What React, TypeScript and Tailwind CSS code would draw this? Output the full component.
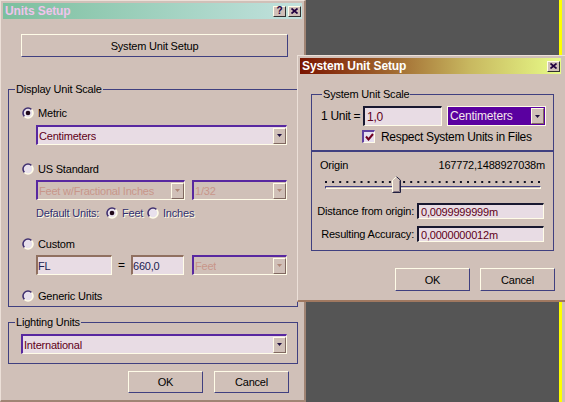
import React from "react";

function Radio({ checked }: { checked?: boolean }) {
  return (
    <svg width="12" height="12" viewBox="0 0 12 12" className="shrink-0">
      <circle cx="6" cy="6" r="5" fill="#e8e0ec" />
      <path d="M2.46 9.54 A5 5 0 0 1 9.54 2.46" fill="none" stroke="#403070" strokeWidth="1.6" />
      <path d="M9.54 2.46 A5 5 0 0 1 2.46 9.54" fill="none" stroke="#fffce8" strokeWidth="1.6" />
      {checked && <circle cx="6" cy="6" r="2.3" fill="#200818" />}
    </svg>
  );
}

function Arrow({ disabled }: { disabled?: boolean }) {
  return (
    <div className="ml-auto w-[13px] h-[16px] shrink-0 flex items-center justify-center bg-[#d0c0b8] border border-t-[#fffce8] border-l-[#fffce8] border-b-[#806860] border-r-[#806860]">
      <svg width="5" height="3" viewBox="0 0 5 3">
        <path d="M0 0 H5 L2.5 3 Z" fill={disabled ? "#b08878" : "#201040"} />
      </svg>
    </div>
  );
}

function Dropdown({ text, className, disabled }: { text: string; className: string; disabled?: boolean }) {
  return (
    <div
      className={`h-[20px] flex items-center border-t-2 border-l-2 border-t-[#5828a0] border-l-[#5828a0] border-b border-r border-b-[#fffce8] border-r-[#fffce8] ${
        disabled ? "bg-[#d0c0b8] text-[#c8968a]" : "bg-[#e8dce4] text-[#600018]"
      } ${className}`}
    >
      <span className="pl-[1px] whitespace-nowrap overflow-hidden">{text}</span>
      <Arrow disabled={disabled} />
    </div>
  );
}

function TextInput({ text, className, dark }: { text: string; className: string; dark?: boolean }) {
  return (
    <div
      className={`flex items-center bg-[#e8dce4] border-t-2 border-l-2 border-b border-r border-b-[#fffce8] border-r-[#fffce8] whitespace-nowrap overflow-hidden ${
        dark ? "border-t-[#181830] border-l-[#181830] text-[#600018] pl-[2px]" : "border-t-[#907060] border-l-[#907060] text-[#202050]"
      } ${className}`}
    >
      {text}
    </div>
  );
}

function Btn({ text, className }: { text: string; className: string }) {
  return (
    <div
      className={`flex items-center justify-center bg-[#d0c0b8] border border-t-[#fffce8] border-l-[#fffce8] border-b-[#404080] border-r-[#404080] text-black ${className}`}
    >
      {text}
    </div>
  );
}

function CloseGlyph() {
  return (
    <svg width="7" height="6" viewBox="0 0 7 6">
      <path d="M0.5 0.5 L6.5 5.5 M6.5 0.5 L0.5 5.5" stroke="#200040" strokeWidth="1.7" />
    </svg>
  );
}

function TitleBtn({ children }: { children: React.ReactNode }) {
  return (
    <div className="w-[13px] h-[11px] flex items-center justify-center bg-[#d0c0b8] border border-t-[#fffce8] border-l-[#fffce8] border-b-[#303030] border-r-[#303030] text-[#200040] font-bold text-[10px] leading-[10px]">
      {children}
    </div>
  );
}

const emboss = "text-[#303070] [text-shadow:1px_1px_0_#fffce8]";

function LeftWindow() {
  return (
    <div className="absolute left-0 top-0 w-[306px] h-[402px] bg-[#d0c0b8] border-l border-t border-[#ece0d8] border-r-2 border-b-2 border-r-[#a08474] border-b-[#a08474] pt-[2px] px-[2px] flex flex-col">
      <div className="h-[16px] flex items-center bg-[linear-gradient(to_right,#7cbf9e,#c2e2de)] pl-[2px]">
        <span className="font-bold text-[12px] tracking-[-0.1px] text-[#f0c4ec]">Units Setup</span>
        <div className="ml-auto mr-[1px] flex gap-[2px]">
          <TitleBtn>?</TitleBtn>
          <TitleBtn>
            <CloseGlyph />
          </TitleBtn>
        </div>
      </div>

      <Btn text="System Unit Setup" className="mt-[15px] ml-[18px] w-[267px] h-[23px]" />

      <div className="relative mt-[32px] ml-[5px] w-[290px] h-[218px] shrink-0 border border-[#404080] flex flex-col">
        <span className="absolute -top-[8px] left-[6px] px-[1px] bg-[#d0c0b8]">Display Unit Scale</span>
        <div className="mt-[16px] ml-[13px] h-[14px] flex items-center gap-[4px]">
          <Radio checked />
          <span>Metric</span>
        </div>
        <Dropdown text="Centimeters" className="mt-[5px] ml-[27px] w-[251px]" />

        <div className="mt-[17px] ml-[13px] h-[14px] flex items-center gap-[4px]">
          <Radio />
          <span>US Standard</span>
        </div>
        <div className="mt-[4px] ml-[27px] flex gap-[7px]">
          <Dropdown text="Feet w/Fractional Inches" className="w-[149px]" disabled />
          <Dropdown text="1/32" className="w-[95px]" disabled />
        </div>
        <div className="mt-[6px] ml-[27px] h-[14px] flex items-center">
          <span className={`w-[70px] ${emboss}`}>Default Units:</span>
          <Radio checked />
          <span className={`ml-[4px] w-[25px] ${emboss}`}>Feet</span>
          <Radio />
          <span className={`ml-[4px] ${emboss}`}>Inches</span>
        </div>

        <div className="mt-[17px] ml-[13px] h-[14px] flex items-center gap-[4px]">
          <Radio />
          <span>Custom</span>
        </div>
        <div className="mt-[4px] ml-[27px] flex items-center">
          <TextInput text="FL" className="w-[76px] h-[20px]" />
          <span className="w-[19px] text-center text-[12px]">=</span>
          <TextInput text="660,0" className="w-[53px] h-[20px]" />
          <Dropdown text="Feet" className="ml-[8px] w-[95px]" disabled />
        </div>

        <div className="mt-[14px] ml-[13px] h-[14px] flex items-center gap-[4px]">
          <Radio />
          <span>Generic Units</span>
        </div>
      </div>

      <div className="relative mt-[15px] ml-[5px] w-[290px] h-[42px] shrink-0 border border-[#404080] flex flex-col">
        <span className="absolute -top-[8px] left-[6px] px-[1px] bg-[#d0c0b8]">Lighting Units</span>
        <Dropdown text="International" className="mt-[11px] ml-[12px] w-[266px]" />
      </div>

      <div className="mt-[7px] ml-[125px] flex gap-[11px]">
        <Btn text="OK" className="w-[75px] h-[22px]" />
        <Btn text="Cancel" className="w-[75px] h-[22px]" />
      </div>
    </div>
  );
}

function Slider() {
  const dots = Array.from({ length: 31 }, (_, i) => i);
  return (
    <div className="relative mt-[4px] ml-[13px] w-[216px] h-[17px] flex flex-col pt-[5px]">
      <svg width="216" height="2" viewBox="0 0 216 2" className="block">
        {dots.map((i) => (
          <rect key={i} x={i * 7.1} y="0" width="2" height="2" fill="#101020" />
        ))}
      </svg>
      <div className="mt-[3px] w-[216px] h-[3px] border-t border-l border-t-[#404080] border-l-[#404080] border-b border-r border-b-[#fffce8] border-r-[#fffce8]" />
      <svg width="9" height="17" viewBox="0 0 9 17" className="absolute left-[67px] top-0">
        <path d="M0 4 L4.5 0 L9 4 V17 H0 Z" fill="#d0c0b8" />
        <path d="M0.5 16.5 V4.2 L4.5 0.7" fill="none" stroke="#fffce8" strokeWidth="1" />
        <path d="M4.5 0.7 L8.5 4.2 V16.5 H0.5" fill="none" stroke="#202040" strokeWidth="1" />
        <path d="M7.5 4.6 V15.5 H1.5" fill="none" stroke="#807080" strokeWidth="1" />
      </svg>
    </div>
  );
}

function RightWindow() {
  return (
    <div className="absolute left-[297px] top-[55px] w-[268px] h-[247px] bg-[#d0c0b8] border-l border-t border-[#ece0d8] border-b-2 border-b-[#a07860] pt-[2px] pl-[2px] flex flex-col">
      <div className="w-[261px] h-[16px] shrink-0 flex items-center bg-[linear-gradient(to_right,#7a1400_0%,#a06830_35%,#c8b860_65%,#e8fc88_100%)] pl-[2px]">
        <span className="font-bold text-[12px] tracking-[-0.1px] text-white">System Unit Setup</span>
        <div className="ml-auto mr-[1px]">
          <TitleBtn>
            <CloseGlyph />
          </TitleBtn>
        </div>
      </div>

      <div className="relative mt-[20px] ml-[11px] w-[243px] h-[57px] shrink-0 border border-[#404080] flex flex-col">
        <span className="absolute -top-[8px] left-[10px] px-[1px] bg-[#d0c0b8]">System Unit Scale</span>
        <div className="mt-[11px] pl-[9px] flex items-center">
          <span className="w-[42px] text-[12px] tracking-[-0.3px]">1 Unit =</span>
          <TextInput text="1,0" className="w-[79px] h-[20px] text-[12px]" dark />
          <div className="ml-[5px] w-[99px] h-[20px] flex items-center bg-[#5a00a0] border border-[#fffce8] text-[#f4e6ec] text-[12px]">
            <span className="pl-[2px]">Centimeters</span>
            <div className="ml-auto mr-[1px]">
              <Arrow />
            </div>
          </div>
        </div>
        <div className="mt-[4px] ml-[50px] h-[13px] flex items-center gap-[6px]">
          <div className="w-[13px] h-[13px] flex items-center justify-center bg-[#e8e0f0] border-t-2 border-l-2 border-t-[#6040a0] border-l-[#6040a0] border-b border-r border-b-[#fffce8] border-r-[#fffce8]">
            <svg width="9" height="8" viewBox="0 0 9 8">
              <path d="M1 3.5 L3.5 6.5 L8 1" fill="none" stroke="#700020" strokeWidth="2" />
            </svg>
          </div>
          <span className="text-[12px] tracking-[-0.3px]">Respect System Units in Files</span>
        </div>
      </div>

      <div className="relative ml-[11px] w-[243px] h-[100px] shrink-0 border border-[#404080] flex flex-col">
        <div className="mt-[6px] h-[14px] px-[8px] flex items-center justify-between">
          <span>Origin</span>
          <span>167772,1488927038m</span>
        </div>
        <Slider />
        <div className="mt-[10px] flex items-center">
          <span className="w-[102px] text-right">Distance from origin:</span>
          <TextInput text="0,0099999999m" className="ml-[3px] w-[127px] h-[16px]" dark />
        </div>
        <div className="mt-[7px] flex items-center">
          <span className="w-[102px] text-right">Resulting Accuracy:</span>
          <TextInput text="0,0000000012m" className="ml-[3px] w-[127px] h-[16px]" dark />
        </div>
      </div>

      <div className="mt-[17px] ml-[95px] flex gap-[10px]">
        <Btn text="OK" className="w-[75px] h-[23px]" />
        <Btn text="Cancel" className="w-[75px] h-[23px]" />
      </div>
    </div>
  );
}

export default function App() {
  return (
    <div className="relative w-[565px] h-[402px] overflow-hidden bg-[#555555] font-['Liberation_Sans',Arial,sans-serif] text-[11px] tracking-[-0.2px] leading-[14px] text-black">
      <div className="absolute left-[559px] top-0 w-[3px] h-full bg-[#ffff00]" />
      <div className="absolute left-[562px] top-0 w-[3px] h-full bg-[#d0c0b8]" />
      <LeftWindow />
      <RightWindow />
    </div>
  );
}
